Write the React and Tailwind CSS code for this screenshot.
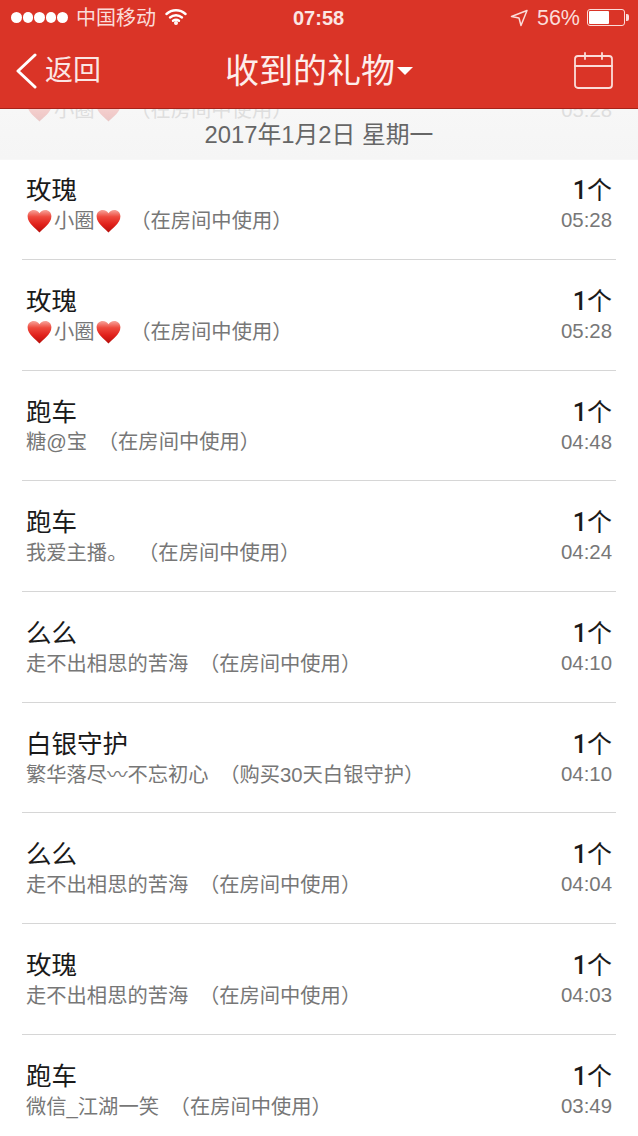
const rows = [
  { t: "玫瑰", hearts: true, name: "小圈", note: "（在房间中使用）", time: "05:28" },
  { t: "玫瑰", hearts: true, name: "小圈", note: "（在房间中使用）", time: "05:28" },
  { t: "跑车", name: "糖@宝", note: "（在房间中使用）", time: "04:48" },
  { t: "跑车", name: "我爱主播。", note: "（在房间中使用）", time: "04:24" },
  { t: "么么", name: "走不出相思的苦海", note: "（在房间中使用）", time: "04:10" },
  { t: "白银守护", name: "繁华落尽〰不忘初心", note: "（购买30天白银守护）", time: "04:10" },
  { t: "么么", name: "走不出相思的苦海", note: "（在房间中使用）", time: "04:04" },
  { t: "玫瑰", name: "走不出相思的苦海", note: "（在房间中使用）", time: "04:03" },
  { t: "跑车", name: "微信_江湖一笑", note: "（在房间中使用）", time: "03:49" },
];

function Heart({ id = "h", faded, className = "" }) {
  return (
    <svg width="25" height="24" viewBox="0 0 25 24" className={`shrink-0 ${faded ? "opacity-20" : ""} ${className}`}>
      <defs>
        <linearGradient id={id} x1="0" y1="0" x2="0" y2="1">
          <stop offset="0" stopColor="#f7a59c" />
          <stop offset="0.3" stopColor="#ee4a3e" />
          <stop offset="0.65" stopColor="#e0201a" />
          <stop offset="1" stopColor="#b5100c" />
        </linearGradient>
      </defs>
      <path d="M12.500 23.500C9 19.500.6 14.600.6 7.300.6 3.400 3.400 1 6.800 1c2.600 0 4.600 1.300 5.700 3.300C13.600 2.300 15.600 1 18.200 1c3.400 0 6.200 2.400 6.200 6.300 0 7.300-8.400 12.200-11.900 16.200z" fill={`url(#${id})`} />
    </svg>
  );
}

function Row({ r, i }) {
  return (
    <div className={`mx-[22px] h-[110.7px] shrink-0 border-b border-[#d6d6d6] pl-1 pr-[4px] flex justify-between pt-[26px] ${i === 0 ? "-mt-[10.700px]" : ""}`}>
      <div className="min-w-0">
        <div className="text-[25.500px] leading-[30px] text-[#1a1a1a] h-[31px]">{r.t}</div>
        <div className="flex items-center h-[30px] text-[20.300px] text-[#777777] whitespace-pre">
          {r.hearts && <Heart id={`h${i}a`} className="mr-[2px] ml-[1px]" />}
          <span>{r.name}</span>
          {r.hearts && <Heart id={`h${i}b`} className="ml-[1px]" />}
          <span className={r.hearts ? "ml-[4px]" : "ml-[5px]"}>{" "}{r.note}</span>
        </div>
      </div>
      <div className="flex flex-col items-end">
        <div className="text-[25px] leading-[30px] text-[#1a1a1a] h-[30px]"><span className="font-['Roboto'] font-medium">1</span>个</div>
        <div className="h-[30px] leading-[30px] text-[20.400px] text-[#777777]">{r.time}</div>
      </div>
    </div>
  );
}

export default function App() {
  return (
    <div className="w-[638px] h-[1136px] overflow-hidden bg-white flex flex-col font-['Liberation_Sans','Noto_Sans_CJK_SC',sans-serif]">
      <header className="h-[109px] shrink-0 bg-[#da3427] border-b border-[#a82219] text-white flex flex-col">
        <div className="h-[35px] flex items-center justify-between pl-[11px] pr-[9px] relative">
          <div className="flex items-center">
            <div className="flex gap-[1px]">
              {[0, 1, 2, 3, 4].map((d) => <span key={d} className="w-[10.600px] h-[10.600px] rounded-full bg-white" />)}
            </div>
            <span className="ml-[8px] text-[20px] text-[#fbdcd9]">中国移动</span>
            <svg width="22" height="17" viewBox="0 0 22 17" className="ml-[9px] -mt-[2px]" fill="none" stroke="#fff" strokeWidth="2.400" strokeLinecap="round">
              <path d="M1.500 6C7 1 15 1 20.500 6" />
              <path d="M5 9.500c3.500-3 8.500-3 12 0" />
              <path d="M8 12.800c1.800-1.300 4.200-1.300 6 0" />
              <circle cx="11" cy="15" r="0.800" fill="#fff" />
            </svg>
          </div>
          <div className="absolute left-[293px] top-[6px] text-[20px] font-bold text-[#fbe6e4] leading-[24px]">07:58</div>
          <div className="flex items-center">
            <svg width="18" height="18" viewBox="0 0 18 18" fill="none" stroke="#fbdcd9" strokeWidth="1.500" strokeLinejoin="round">
              <path d="M17 1.500L1.500 7.500l7.500 1.500 2 7.500z" />
            </svg>
            <span className="ml-[9px] text-[21.500px] text-[#fbdcd9] leading-[24px]">56%</span>
            <div className="ml-[7px] w-[38px] h-[17px] border border-[#fbdcd9] rounded-[3px] p-[1px]">
              <div className="w-[20px] h-full bg-white rounded-[1px]" />
            </div>
            <div className="ml-[1px] w-[3px] h-[7px] bg-[#fbdcd9] rounded-r-[2px]" />
          </div>
        </div>
        <div className="flex-1 flex items-center justify-between pl-[16px] pr-[24px] relative pb-[2px]">
          <div className="flex items-center">
            <svg width="21" height="36" viewBox="0 0 21 36" fill="none" stroke="#fff" strokeWidth="3" strokeLinecap="round" strokeLinejoin="round">
              <path d="M19 2L2 18l17 16" />
            </svg>
            <span className="ml-[8px] text-[28px] text-[#fbe6e4]">返回</span>
          </div>
          <div className="absolute left-[225px] top-[14px] flex items-center">
            <span className="text-[34px] leading-[44px] text-[#fdeeec]">收到的礼物</span>
            <span className="ml-[2px] w-0 h-0 border-x-[8.500px] border-x-transparent border-t-[8px] border-t-white" />
          </div>
          <svg width="40" height="38" viewBox="0 0 40 38" fill="none" stroke="#fbdcd9" strokeWidth="1.800" strokeLinecap="round">
            <rect x="1" y="4" width="37" height="32" rx="3" />
            <path d="M1 14h37M11 1v6M28 1v6" />
          </svg>
        </div>
      </header>
      <div className="relative h-[51px] shrink-0 bg-linear-to-b from-[#f7f7f7] to-[#f5f5f5] border-b border-[#f7f7f7] overflow-hidden">
        <div className="absolute left-[26px] right-[26px] -top-[14px] flex justify-between text-[20.300px] text-[#dedede] whitespace-pre">
          <div className="flex items-center"><Heart id="ga" faded className="ml-[1px] mr-[2px]" /><span>小圈</span><Heart id="gb" faded className="ml-[1px]" /><span className="ml-[4px]"> （在房间中使用）</span></div>
          <span>05:28</span>
        </div>
        <div className="absolute left-0 right-0 top-[12px] text-center text-[23.800px] leading-[28px] text-[#666666]">2017年1月2日 星期一</div>
      </div>
      <div className="flex-1 flex flex-col">
        {rows.map((r, i) => <Row key={i} r={r} i={i} />)}
      </div>
    </div>
  );
}
